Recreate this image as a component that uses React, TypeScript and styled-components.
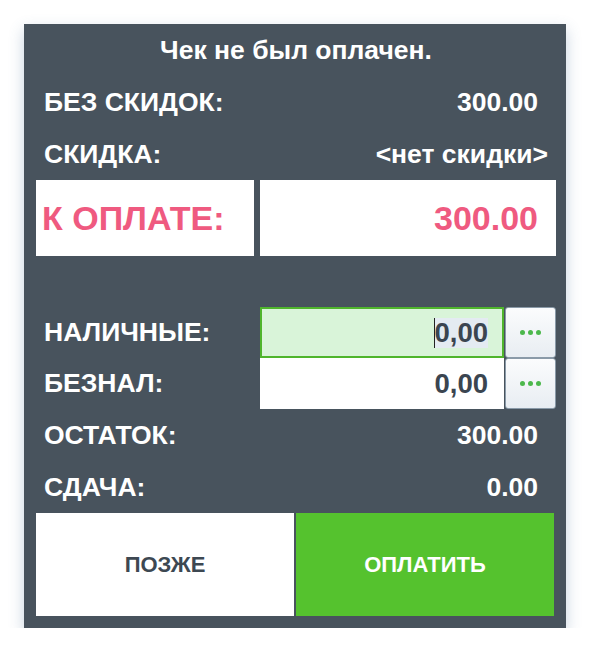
import React from 'react'
import styled, { createGlobalStyle } from 'styled-components'

const GlobalStyle = createGlobalStyle`
  body {
    margin: 0;
    background: #ffffff;
    font-family: "Liberation Sans", Arial, sans-serif;
  }
`

const Page = styled.div`
  padding: 24px 0 0 24px;
`

const Panel = styled.div`
  width: 542px;
  box-sizing: border-box;
  padding: 0 10px 12px 12px;
  background: #48535d;
  box-shadow: 0 6px 14px rgba(70, 110, 150, 0.3);
  color: #ffffff;
  font-weight: bold;
`

const Title = styled.div`
  height: 52px;
  display: flex;
  align-items: center;
  justify-content: center;
  font-size: 26.5px;
`

const Row = styled.div`
  height: 52px;
  display: flex;
  align-items: center;
  justify-content: space-between;
  padding-left: 8px;
  font-size: 26.5px;
`

const Value = styled.span<{ $pr?: number }>`
  padding-right: ${p => p.$pr ?? 18}px;
`

const TotalRow = styled.div`
  display: flex;
  gap: 6px;
  height: 76px;
  margin-bottom: 51px;
`

const TotalBox = styled.div<{ $grow?: boolean }>`
  background: #ffffff;
  color: #ef5a80;
  font-size: 34px;
  display: flex;
  align-items: center;
  justify-content: ${p => (p.$grow ? 'flex-end' : 'flex-start')};
  padding: ${p => (p.$grow ? '0 18px 0 0' : '0 0 0 6px')};
  width: ${p => (p.$grow ? '296px' : '218px')};
  box-sizing: border-box;
`

const PayRow = styled.div`
  display: flex;
  align-items: center;
  height: 51px;
`

const PayLabel = styled.div`
  width: 224px;
  padding-left: 8px;
  box-sizing: border-box;
  font-size: 26.5px;
`

const Field = styled.div<{ $active?: boolean }>`
  width: 245px;
  height: 51px;
  box-sizing: border-box;
  display: flex;
  align-items: center;
  justify-content: flex-end;
  font-size: 27.5px;
  color: #3a4550;
  background: ${p => (p.$active ? '#d9f4d9' : '#ffffff')};
  border: ${p => (p.$active ? '2px solid #4fb52c' : '0')};
  padding-right: ${p => (p.$active ? '14px' : '16px')};
`

const Selected = styled.span`
  background: #e4ebf2;
  border-left: 1px solid #222;
  line-height: 30px;
`

const DotsButton = styled.button`
  width: 51px;
  height: 51px;
  margin-left: 1px;
  border: 1px solid #8a9aa8;
  border-radius: 3px;
  background: linear-gradient(#fbfcfd, #e8edf2);
  display: flex;
  align-items: center;
  justify-content: center;
  gap: 3px;
  padding: 0;
`

const Dot = styled.i`
  width: 5px;
  height: 5px;
  border-radius: 50%;
  background: #4cb84c;
`

const Actions = styled.div`
  display: flex;
  gap: 2px;
  height: 103px;
  padding-right: 2px;
`

const ActionButton = styled.button<{ $primary?: boolean }>`
  flex: 1;
  border: 0;
  font-family: inherit;
  font-weight: bold;
  font-size: 22px;
  background: ${p => (p.$primary ? '#55c22e' : '#ffffff')};
  color: ${p => (p.$primary ? '#ffffff' : '#3d4852')};
`

const Dots = () => (
  <DotsButton>
    <Dot />
    <Dot />
    <Dot />
  </DotsButton>
)

export default function App() {
  return (
    <Page>
      <GlobalStyle />
      <Panel>
        <Title>Чек не был оплачен.</Title>
        <Row>
          <span>БЕЗ СКИДОК:</span>
          <Value>300.00</Value>
        </Row>
        <Row>
          <span>СКИДКА:</span>
          <Value $pr={8}>&lt;нет скидки&gt;</Value>
        </Row>
        <TotalRow>
          <TotalBox>К ОПЛАТЕ:</TotalBox>
          <TotalBox $grow>300.00</TotalBox>
        </TotalRow>
        <PayRow>
          <PayLabel>НАЛИЧНЫЕ:</PayLabel>
          <Field $active>
            <Selected>0,00</Selected>
          </Field>
          <Dots />
        </PayRow>
        <PayRow>
          <PayLabel>БЕЗНАЛ:</PayLabel>
          <Field>0,00</Field>
          <Dots />
        </PayRow>
        <Row>
          <span>ОСТАТОК:</span>
          <Value>300.00</Value>
        </Row>
        <Row>
          <span>СДАЧА:</span>
          <Value>0.00</Value>
        </Row>
        <Actions>
          <ActionButton>ПОЗЖЕ</ActionButton>
          <ActionButton $primary>ОПЛАТИТЬ</ActionButton>
        </Actions>
      </Panel>
    </Page>
  )
}
